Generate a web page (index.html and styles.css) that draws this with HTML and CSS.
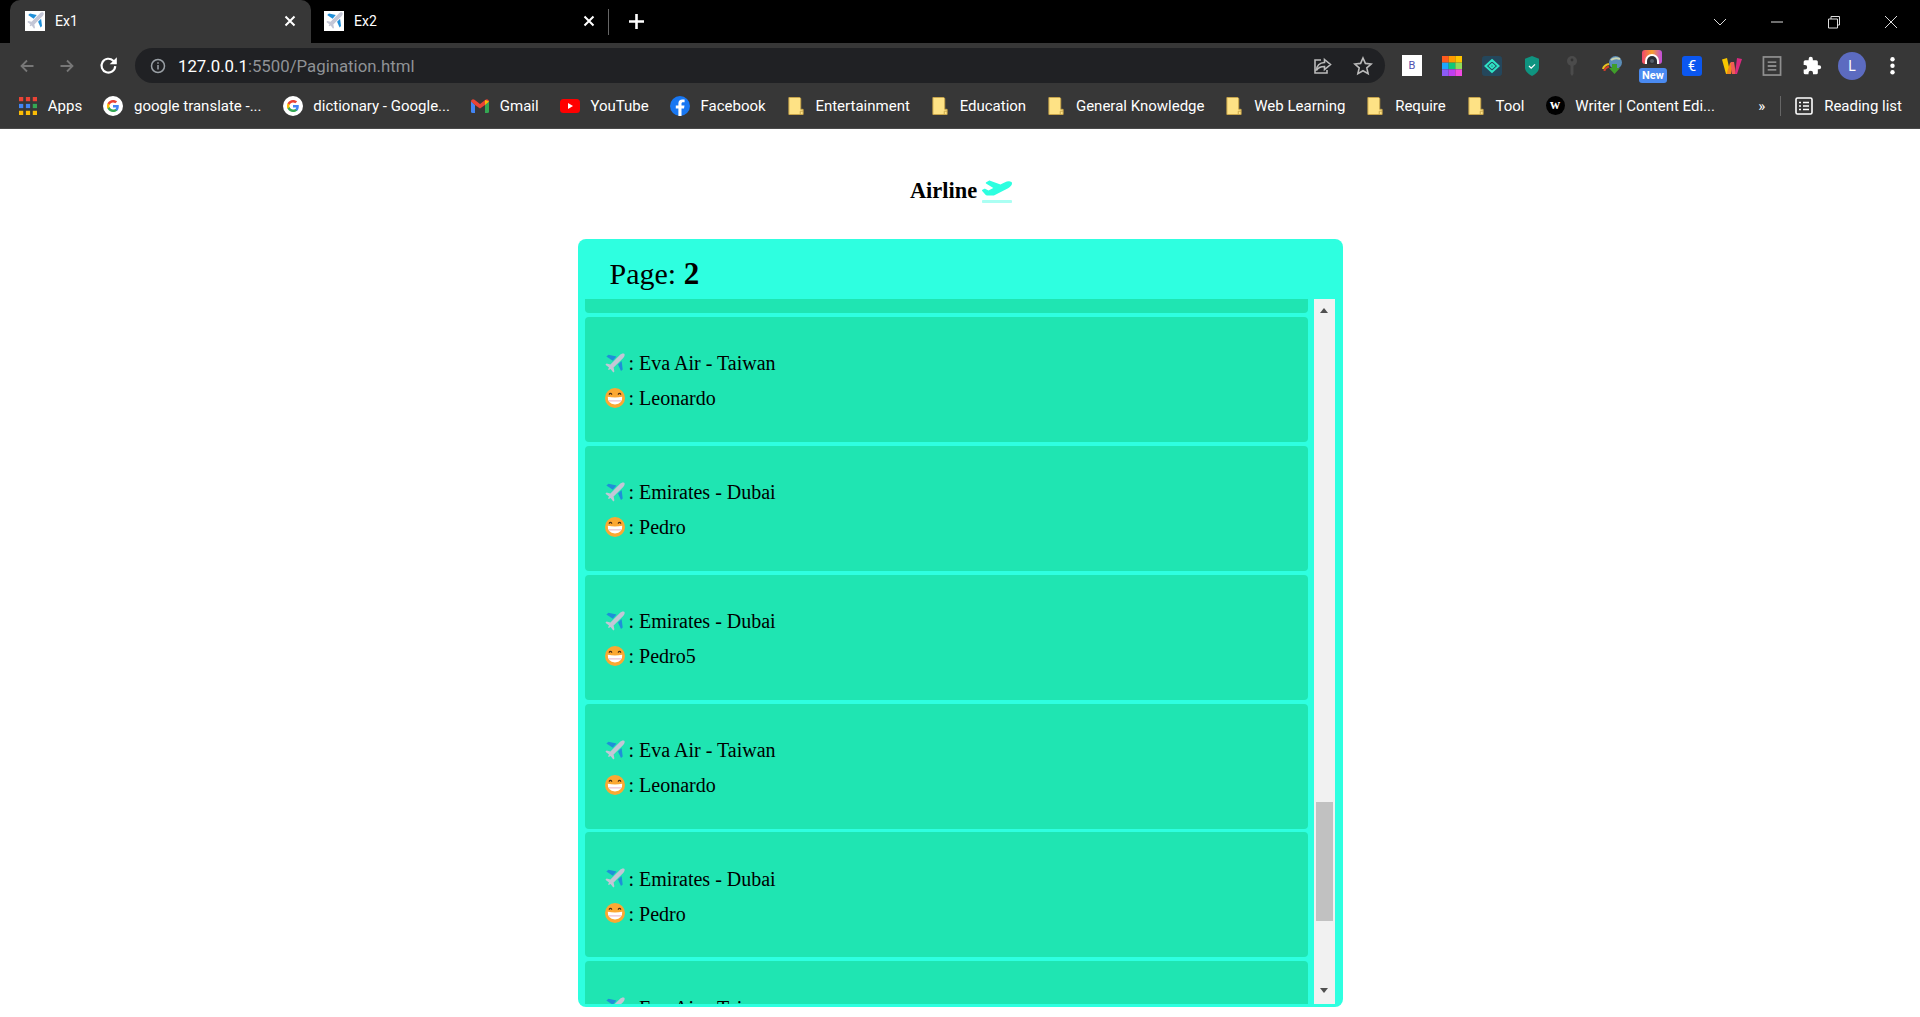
FILE: index.html
```html
<!DOCTYPE html>
<html lang="en">
<head>
  <meta charset="UTF-8"/>
  <meta name="viewport" content="width=device-width, initial-scale=1"/>
  <title>Pagination</title>
  <link rel="stylesheet" href="styles.css">
</head>
<body>

  <svg class="defs" aria-hidden="true">
    <symbol id="plane" viewBox="0 0 20 20">
      <path d="M11.500 3.500 3.500 1.800 1.400 3.600l6.400 4.200z" fill="#1f8fd8"/>
      <path d="M13 11.500l3 6.600 1.700-1.500-1.100-8.600z" fill="#1f8fd8"/>
      <path d="M19.300.8c-1.300-.9-3-.2-4.200 1L5.400 11.400 1.600 10.600.4 11.700l3.600 2.700-.9 1.900.6.600 1.900-.9 2.700 3.600 1.100-1.200-.8-3.800 9.600-9.700c1.200-1.200 1.900-2.900 1.100-4.100z" fill="#c3c6d6"/>
    </symbol>
    <symbol id="grin" viewBox="0 0 20 20">
      <circle cx="10" cy="10" r="10" fill="#fba832"/>
      <path d="M2.800 8.800q7.200 1.500 14.400 0 .5 7-7.200 7.800-7.700-.8-7.200-7.800z" fill="#fff"/>
      <path d="M3.600 12.900h12.800" stroke="#e39ab8" stroke-width=".8" fill="none"/>
      <path d="M4 6.600q1.500-2.400 3 0M13 6.600q1.500-2.400 3 0" stroke="#4a2f14" stroke-width="1.100" fill="none"/>
    </symbol>
    <symbol id="folder" viewBox="0 0 16 19">
      <path d="M.5.500h11.500l1 1v11.500h2.500v5.500H.5z" fill="#fee285" stroke="#caa64a"/>
      <path d="M12.500 18.500v-3.500h3" fill="none" stroke="#caa64a"/>
    </symbol>
    <symbol id="google" viewBox="0 0 20 20">
      <circle cx="10" cy="10" r="10" fill="#fff"/>
      <path d="M15.800 10.200c0-.5 0-.9-.1-1.300H10v2.500h3.300c-.2.800-.6 1.400-1.200 1.900v1.600h2c1.100-1.100 1.700-2.700 1.700-4.700z" fill="#4285f4"/>
      <path d="M10 16c1.600 0 3-.5 4.100-1.500l-2-1.600c-.6.400-1.200.6-2.100.6-1.600 0-2.900-1-3.400-2.500H4.500v1.600C5.600 14.700 7.600 16 10 16z" fill="#34a853"/>
      <path d="M6.600 11.100c-.3-.8-.3-1.500 0-2.300V7.200H4.500c-.7 1.500-.7 3.900 0 5.500z" fill="#fbbc05"/>
      <path d="M10 6.400c.9 0 1.700.3 2.300.9l1.800-1.800C13 4.500 11.600 4 10 4 7.600 4 5.600 5.300 4.500 7.200l2.100 1.600C7.100 7.400 8.400 6.400 10 6.400z" fill="#ea4335"/>
    </symbol>
    <symbol id="favicon" viewBox="0 0 20 20">
      <rect width="20" height="20" fill="#fff"/>
      <use href="#plane" x="2" y="1" width="17" height="17"/>
    </symbol>
    <linearGradient id="rainbow" x1="0" y1="0" x2="1" y2="0">
      <stop offset="0" stop-color="#f0466e"/>
      <stop offset=".5" stop-color="#f9a02c"/>
      <stop offset="1" stop-color="#c04be0"/>
    </linearGradient>
  </svg>

  <header class="browser">
    <div class="tabstrip">
      <div class="tab tab-active">
        <svg class="favicon"><use href="#favicon"/></svg>
        <span class="tab-title">Ex1</span>
        <svg class="tab-close" viewBox="0 0 12 12"><path d="M1.500 1.500l9 9M10.500 1.500l-9 9"/></svg>
      </div>
      <div class="tab">
        <svg class="favicon"><use href="#favicon"/></svg>
        <span class="tab-title">Ex2</span>
        <svg class="tab-close" viewBox="0 0 12 12"><path d="M1.500 1.500l9 9M10.500 1.500l-9 9"/></svg>
      </div>
      <span class="tab-sep"></span>
      <svg class="new-tab" viewBox="0 0 14 14"><path d="M7 0v14M0 7h14"/></svg>
      <div class="window-controls">
        <svg class="win-btn" viewBox="0 0 14 14"><path d="M1 4l6 6 6-6"/></svg>
        <svg class="win-btn" viewBox="0 0 14 14"><path d="M1 7h12"/></svg>
        <svg class="win-btn" viewBox="0 0 14 14"><path d="M1.500 4h9v9h-9zM4 4V1.500h8.500V10H10.500"/></svg>
        <svg class="win-btn" viewBox="0 0 14 14"><path d="M1 1l12 12M13 1L1 13"/></svg>
      </div>
    </div>

    <div class="toolbar">
      <div class="nav-btns">
        <svg class="nav-icon dim" viewBox="0 0 16 16"><path d="M14.500 8h-12M8 2.500L2.500 8 8 13.500"/></svg>
        <svg class="nav-icon dim" viewBox="0 0 16 16"><path d="M1.500 8h12M8 2.500L13.500 8 8 13.500"/></svg>
        <svg class="nav-icon reload" viewBox="0 0 16 16"><path d="M13.700 8.500a5.800 5.800 0 1 1-1.700-4.500L13.500 5.500"/><path class="solid" d="M15 1v6H9z"/></svg>
      </div>
      <div class="omnibox">
        <svg class="info-icon" viewBox="0 0 16 16"><circle cx="8" cy="8" r="6.500"/><path d="M8 7v4.500M8 4.200v1.600"/></svg>
        <span class="url"><span class="url-host">127.0.0.1</span>:5500/Pagination.html</span>
        <svg class="omni-icon" viewBox="0 0 20 20"><path d="M11.500 3.500l6 5-6 5v-3c-4 0-6.500 1-8 4 0-4.500 3-8 8-8zM8 4H2v13h12v-3"/></svg>
        <svg class="omni-icon" viewBox="0 0 20 20"><path d="M10 2l2.400 5.400 5.800.6-4.400 3.900 1.300 5.700L10 14.700l-5.100 2.900 1.300-5.700L1.800 8l5.800-.6z"/></svg>
      </div>
      <div class="extensions">
        <span class="ext"><span class="ext-b">B</span></span>
        <span class="ext">
          <svg class="ext-svg" viewBox="0 0 21 21">
            <rect width="7" height="7" fill="#ff5a1f"/><rect x="7" width="7" height="7" fill="#ff9a00"/><rect x="14" width="7" height="7" fill="#ffc400"/>
            <rect y="7" width="7" height="7" fill="#1ea7fd"/><rect x="7" y="7" width="7" height="7" fill="#10c878"/><rect x="14" y="7" width="7" height="7" fill="#8fdc5a"/>
            <rect y="14" width="7" height="7" fill="#8b5cf6"/><rect x="7" y="14" width="7" height="7" fill="#c03ef0"/><rect x="14" y="14" width="7" height="7" fill="#f04be0"/>
          </svg>
        </span>
        <span class="ext">
          <svg class="ext-svg" viewBox="0 0 20 20">
            <rect width="20" height="20" rx="3" fill="#24475c"/>
            <path d="M10 4l6.500 6-6.500 6-6.500-6zM10 8l2.200 2-2.200 2-2.200-2z" fill="none" stroke="#2fe3c4" stroke-width="2"/>
          </svg>
        </span>
        <span class="ext">
          <svg class="ext-svg" viewBox="0 0 15 20">
            <path d="M7.500 0l7 2.800v8.700c0 4-3.500 6.800-7 8.500-3.500-1.700-7-4.500-7-8.500V2.800z" fill="#0f9480"/>
            <path d="M4.500 10l2.200 2.200 3.800-3.800" fill="none" stroke="#fff" stroke-width="1.300"/>
          </svg>
        </span>
        <span class="ext">
          <svg class="ext-svg" viewBox="0 0 10 20">
            <circle cx="5" cy="5" r="5" fill="#4b4b4b"/>
            <circle cx="5" cy="4" r="1.400" fill="#333"/>
            <path d="M3.500 8h3v10l-1.500 2-1.500-2z" fill="#4b4b4b"/>
          </svg>
        </span>
        <span class="ext">
          <svg class="ext-svg" viewBox="0 0 20 20">
            <circle cx="13.500" cy="6.500" r="6.500" fill="#5b8db8"/>
            <path d="M9 4q4-3 9-1" fill="none" stroke="#c9d2b0" stroke-width="2"/>
            <path d="M10 8h5v4h3l-5.500 6L7 12h3z" fill="#3f9e2a"/>
            <path d="M1 13q1-4 6-5" fill="none" stroke="#e8c020" stroke-width="2.200"/>
            <path d="M2.500 15q0-3 4.500-4.500" fill="none" stroke="#d23c2a" stroke-width="2"/>
          </svg>
        </span>
        <span class="ext ext-rainbow">
          <svg class="ext-svg" viewBox="0 0 20 14">
            <rect width="20" height="14" rx="3" fill="url(#rainbow)"/>
            <path d="M3 14V11a7 7 0 0 1 14 0v3z" fill="#fff"/>
            <path d="M5 14V11a5 5 0 0 1 10 0v3z" fill="#2b2f36"/>
            <circle cx="10" cy="11" r="2" fill="#56606c"/>
          </svg>
          <span class="badge-new">New</span>
        </span>
        <span class="ext"><span class="ext-euro">€</span></span>
        <span class="ext">
          <svg class="ext-svg" viewBox="0 0 20 16">
            <path d="M0 1.500L5 0l3.500 16H4z" fill="#f7c600"/>
            <path d="M4.500 16L8 5h3L9 16z" fill="#f08a1d"/>
            <path d="M8.500 4H12l2 12H10z" fill="#f25c54"/>
            <path d="M15 0l5 1-5 15h-2z" fill="#d9297f"/>
          </svg>
        </span>
        <span class="ext">
          <svg class="ext-svg" viewBox="0 0 20 21">
            <rect x="1" y="1" width="18" height="19" fill="none" stroke="#8f8f8f" stroke-width="1.800"/>
            <path d="M5.500 6.500h9M5.500 10.500h9M5.500 14.500h9" stroke="#a8a8a8" stroke-width="1.400"/>
          </svg>
        </span>
        <span class="ext">
          <svg class="ext-svg" viewBox="0 0 24 24"><path fill="#fff" d="M20.500 11H19V7a2 2 0 0 0-2-2h-4V3.500a2.500 2.500 0 0 0-5 0V5H4a2 2 0 0 0-2 2v3.800h1.500a2.700 2.700 0 0 1 0 5.400H2V20a2 2 0 0 0 2 2h3.800v-1.500a2.700 2.700 0 0 1 5.400 0V22H17a2 2 0 0 0 2-2v-4h1.500a2.500 2.500 0 0 0 0-5z"/></svg>
        </span>
        <span class="ext"><span class="avatar">L</span></span>
        <span class="ext">
          <svg class="ext-menu" viewBox="0 0 5 18"><circle cx="2.500" cy="2.300" r="2.200" fill="#fff"/><circle cx="2.500" cy="8.800" r="2.200" fill="#fff"/><circle cx="2.500" cy="15.200" r="2.200" fill="#fff"/></svg>
        </span>
      </div>
    </div>

    <nav class="bookmarks">
      <a class="bm">
        <svg class="bm-icon" viewBox="0 0 17 17">
          <g fill="#ea4335"><rect width="4" height="4"/><rect x="6.500" width="4" height="4"/><rect x="13" width="4" height="4"/></g>
          <g fill="#4285f4"><rect y="6.500" width="4" height="4"/><rect x="6.500" y="6.500" width="4" height="4"/></g>
          <rect x="13" y="6.500" width="4" height="4" fill="#34a853"/>
          <g fill="#fbbc05"><rect y="13" width="4" height="4"/><rect x="6.500" y="13" width="4" height="4"/><rect x="13" y="13" width="4" height="4"/></g>
        </svg>
        Apps
      </a>
      <a class="bm"><svg class="bm-icon bm-icon-lg"><use href="#google"/></svg>google translate -...</a>
      <a class="bm"><svg class="bm-icon bm-icon-lg"><use href="#google"/></svg>dictionary - Google...</a>
      <a class="bm">
        <svg class="bm-icon" viewBox="0 0 18 14">
          <path d="M0 2v10.500q0 1.500 1.500 1.500H4V6z" fill="#4285f4"/>
          <path d="M18 2v10.500q0 1.500-1.500 1.500H14V6z" fill="#34a853"/>
          <path d="M0 2.500C0 .5 2 -.5 3.500.7L9 5l5.500-4.300C16-.5 18 .5 18 2.500L14 6 9 9.500 4 6z" fill="#ea4335"/>
          <path d="M14 .9l4 1.600L14 6z" fill="#fbbc05"/>
        </svg>
        Gmail
      </a>
      <a class="bm">
        <svg class="bm-icon bm-icon-lg" viewBox="0 0 20 14"><rect width="20" height="14" rx="3.500" fill="#f00"/><path d="M8 4l5 3-5 3z" fill="#fff"/></svg>
        YouTube
      </a>
      <a class="bm">
        <svg class="bm-icon bm-icon-lg" viewBox="0 0 20 20"><circle cx="10" cy="10" r="10" fill="#1877f2"/><path d="M11.500 20v-7.500h2.500l.5-3h-3V7.700c0-.9.400-1.500 1.600-1.500h1.500V3.600c-.5-.1-1.400-.2-2.300-.2-2.400 0-3.900 1.400-3.900 3.900v2.200H5.800v3h2.600V20z" fill="#fff"/></svg>
        Facebook
      </a>
      <a class="bm"><svg class="bm-icon"><use href="#folder"/></svg>Entertainment</a>
      <a class="bm"><svg class="bm-icon"><use href="#folder"/></svg>Education</a>
      <a class="bm"><svg class="bm-icon"><use href="#folder"/></svg>General Knowledge</a>
      <a class="bm"><svg class="bm-icon"><use href="#folder"/></svg>Web Learning</a>
      <a class="bm"><svg class="bm-icon"><use href="#folder"/></svg>Require</a>
      <a class="bm"><svg class="bm-icon"><use href="#folder"/></svg>Tool</a>
      <a class="bm"><span class="bm-writer">w</span>Writer | Content Edi...</a>
      <div class="bm-end">
        <span class="bm-more">»</span>
        <span class="bm-sep"></span>
        <a class="bm">
          <svg class="bm-icon" viewBox="0 0 18 18"><rect x="1" y="1" width="16" height="16" rx="1.500" fill="none" stroke="#fff" stroke-width="1.600"/><path d="M4 5.500h2M8 5.500h6M4 9h2M8 9h6M4 12.500h2M8 12.500h6" stroke="#fff" stroke-width="1.500"/></svg>
          Reading list
        </a>
      </div>
    </nav>
  </header>

  <main class="page">
    <h1 class="title">Airline
      <svg class="title-icon" viewBox="0 0 640 512">
        <path class="runway" d="M624 448H16c-8.840 0-16 7.160-16 16v32c0 8.840 7.160 16 16 16h608c8.840 0 16-7.160 16-16v-32c0-8.840-7.160-16-16-16z"/>
        <path d="M80.550 341.270c6.280 6.840 15.100 10.720 24.330 10.710l130.540-.18a65.620 65.620 0 0 0 29.640-7.120l290.960-147.650c26.740-13.570 50.710-32.940 67.020-58.310 18.310-28.480 20.300-49.090 13.070-63.650-7.210-14.570-24.740-25.270-58.250-27.450-29.850-1.940-59.540 5.920-86.280 19.480l-98.510 49.990-218.700-82.060a17.800 17.800 0 0 0-18-1.110L90.620 67.290c-10.670 5.410-13.250 19.650-5.170 28.530l156.220 98.100-103.210 52.380-72.350-36.470a17.800 17.800 0 0 0-16.070.02L9.910 230.220c-10.440 5.300-13.190 19.120-5.570 28.080z"/>
      </svg>
    </h1>

    <section class="card">
      <h2 class="card-head">Page: <b class="page-num">2</b></h2>
      <div class="card-body">
        <div class="list">
          <div class="flight flight-cut"></div>
          <div class="flight">
            <p class="flight-row"><svg class="emoji"><use href="#plane"/></svg>: Eva Air - Taiwan</p>
            <p class="flight-row"><svg class="emoji"><use href="#grin"/></svg>: Leonardo</p>
          </div>
          <div class="flight">
            <p class="flight-row"><svg class="emoji"><use href="#plane"/></svg>: Emirates - Dubai</p>
            <p class="flight-row"><svg class="emoji"><use href="#grin"/></svg>: Pedro</p>
          </div>
          <div class="flight">
            <p class="flight-row"><svg class="emoji"><use href="#plane"/></svg>: Emirates - Dubai</p>
            <p class="flight-row"><svg class="emoji"><use href="#grin"/></svg>: Pedro5</p>
          </div>
          <div class="flight">
            <p class="flight-row"><svg class="emoji"><use href="#plane"/></svg>: Eva Air - Taiwan</p>
            <p class="flight-row"><svg class="emoji"><use href="#grin"/></svg>: Leonardo</p>
          </div>
          <div class="flight">
            <p class="flight-row"><svg class="emoji"><use href="#plane"/></svg>: Emirates - Dubai</p>
            <p class="flight-row"><svg class="emoji"><use href="#grin"/></svg>: Pedro</p>
          </div>
          <div class="flight">
            <p class="flight-row"><svg class="emoji"><use href="#plane"/></svg>: Eva Air - Taiwan</p>
            <p class="flight-row"><svg class="emoji"><use href="#grin"/></svg>: Leonardo</p>
          </div>
        </div>
        <div class="scrollbar">
          <span class="arrow-up"></span>
          <span class="thumb"></span>
          <span class="arrow-down"></span>
        </div>
      </div>
    </section>
  </main>

</body>
</html>
```

FILE: styles.css
```css
* {
  box-sizing: border-box;
}

html, body {
  margin: 0;
  height: 100%;
  overflow: hidden;
  background-color: #fff;
}

.defs {
  position: absolute;
  width: 0;
  height: 0;
}

/* === browser chrome === */
.browser {
  font-family: Roboto, "Liberation Sans", sans-serif;
  color: #fff;
}

.tabstrip {
  display: flex;
  align-items: center;
  height: 43px;
  padding-left: 10px;
  background-color: #000;
}

.tab {
  display: flex;
  align-items: center;
  width: 301px;
  height: 43px;
  padding: 0 15px 2px 15px;
  font-size: 14px;
}

.tab-active {
  margin-right: -2px;
  background-color: #373737;
  border-radius: 10px 10px 0 0;
}

.favicon {
  width: 20px;
  height: 20px;
}

.tab-title {
  flex: 1;
  margin-left: 10px;
}

.tab-close {
  width: 12px;
  height: 12px;
  stroke: #fff;
  stroke-width: 2;
  fill: none;
}

.tab-sep {
  width: 1px;
  height: 26px;
  margin-left: -2px;
  background-color: #666;
}

.new-tab {
  width: 15px;
  height: 15px;
  margin-left: 20px;
  stroke: #fff;
  stroke-width: 2.400;
  fill: none;
}

.window-controls {
  display: flex;
  margin-left: auto;
  padding-right: 1px;
}

.win-btn {
  width: 14px;
  height: 14px;
  margin: 0 21.500px;
  stroke: #ddd;
  stroke-width: 1;
  fill: none;
}

.toolbar {
  display: flex;
  align-items: flex-start;
  height: 40px;
  padding-top: 5px;
  background-color: #373737;
}

.nav-btns {
  display: flex;
  align-items: center;
  gap: 24px;
  width: 135px;
  height: 35px;
  padding-left: 19px;
}

.nav-icon {
  width: 16px;
  height: 16px;
  stroke: #fff;
  stroke-width: 1.800;
  fill: none;
}

.nav-icon.dim {
  stroke: #777;
}

.nav-icon.reload {
  width: 19px;
  height: 19px;
}

.nav-icon .solid {
  fill: #fff;
  stroke: none;
}

.omnibox {
  display: flex;
  align-items: center;
  width: 1250px;
  height: 35px;
  padding: 0 12px 0 15px;
  background-color: #202124;
  border-radius: 18px;
}

.info-icon {
  width: 16px;
  height: 16px;
  stroke: #9aa0a6;
  stroke-width: 1.500;
  fill: none;
}

.url {
  flex: 1;
  margin-left: 12px;
  font-size: 16.800px;
  color: #8f9296;
}

.url-host {
  color: #fff;
}

.omni-icon {
  width: 20px;
  height: 20px;
  margin-left: 20px;
  stroke: #bbb;
  stroke-width: 1.600;
  fill: none;
}

.extensions {
  display: flex;
  padding-left: 7px;
}

.ext {
  display: flex;
  position: relative;
  justify-content: center;
  align-items: center;
  width: 40px;
  height: 35px;
}

.ext-svg {
  width: 20px;
  height: 20px;
}

.ext-menu {
  width: 5px;
  height: 18px;
}

.ext-b {
  width: 20px;
  height: 21px;
  font-size: 11px;
  line-height: 21px;
  text-align: center;
  color: #5050b0;
  background-color: #fff;
}

.ext-euro {
  width: 20px;
  height: 20px;
  font-size: 15px;
  line-height: 20px;
  text-align: center;
  background-color: #0b57f0;
  border-radius: 3px;
}

.ext-rainbow .ext-svg {
  height: 14px;
  margin-top: -17px;
}

/* sits over the rainbow icon */
.badge-new {
  position: absolute;
  left: 7px;
  bottom: 0;
  width: 28px;
  height: 15px;
  font-size: 11px;
  font-weight: bold;
  line-height: 15px;
  text-align: center;
  background-color: #4a8af0;
  border-radius: 3px;
}

.avatar {
  width: 28px;
  height: 28px;
  font-size: 14px;
  line-height: 28px;
  text-align: center;
  background-color: #5c6bc0;
  border-radius: 50%;
}

.bookmarks {
  display: flex;
  align-items: center;
  gap: 21px;
  height: 46px;
  padding: 0 18px 0 19px;
  font-size: 15px;
  background-color: #373737;
  border-bottom: 1px solid #4a4a4a;
}

.bm {
  display: flex;
  align-items: center;
  gap: 10.800px;
  white-space: nowrap;
}

.bm-icon {
  width: 18px;
  height: 18px;
}

.bm-icon-lg {
  width: 20px;
  height: 20px;
}

.bm-writer {
  width: 19px;
  height: 19px;
  font-family: "Liberation Serif", serif;
  font-size: 14px;
  font-weight: bold;
  line-height: 17px;
  text-align: center;
  background-color: #000;
  border-radius: 50%;
}

.bm-end {
  display: flex;
  align-items: center;
  margin-left: auto;
}

.bm-more {
  font-size: 15px;
}

.bm-sep {
  width: 1px;
  height: 20px;
  margin: 0 14px 0 15px;
  background-color: #666;
}

/* === page === */
.page {
  display: flex;
  flex-direction: column;
  align-items: center;
  font-family: "Liberation Serif", serif;
  color: #000;
}

.title {
  display: flex;
  align-items: center;
  gap: 5px;
  height: 110px;
  margin: 0;
  padding: 14px 0 0 2px;
  font-size: 22.400px;
}

.title-icon {
  width: 30px;
  height: 24px;
  fill: #2effe0;
}

.title-icon .runway {
  opacity: 0.4;
}

.card {
  display: flex;
  flex-direction: column;
  width: 765px;
  height: 768px;
  padding: 0 8px 3px 7px;
  background-color: #2effe0;
  border-radius: 8px;
}

.card-head {
  height: 60px;
  margin: 0;
  padding: 18px 0 0 25px;
  font-size: 30px;
  font-weight: normal;
  line-height: 34px;
}

.page-num {
  font-size: 31px;
  font-weight: bold;
}

.card-body {
  display: flex;
  flex: 1;
  min-height: 0;
}

.list {
  width: 723px;
  overflow: hidden;
}

.flight {
  height: 125px;
  margin-bottom: 3.900px;
  padding: 29.500px 20px 0;
  background-color: #1fe5b2;
  border-radius: 4px;
}

/* scrolled mostly out of view */
.flight-cut {
  height: 14px;
  padding: 0;
  border-radius: 0 0 4px 4px;
}

.flight-row {
  display: flex;
  align-items: center;
  gap: 4px;
  height: 35px;
  margin: 0;
  font-size: 20px;
  white-space: pre;
}

.emoji {
  width: 20px;
  height: 20px;
  margin-bottom: 2px;
  flex: none;
}

.scrollbar {
  display: flex;
  flex-direction: column;
  align-items: center;
  width: 21px;
  margin-left: 6px;
  background-color: #f1f1f1;
}

.arrow-up {
  margin-top: 9px;
  border: 4.500px solid transparent;
  border-top: 0;
  border-bottom: 5px solid #505050;
}

.thumb {
  width: 17px;
  height: 119px;
  margin-top: 489px;
  background-color: #c1c1c1;
}

.arrow-down {
  margin-top: 67px;
  border: 4.500px solid transparent;
  border-bottom: 0;
  border-top: 5px solid #505050;
}
```
